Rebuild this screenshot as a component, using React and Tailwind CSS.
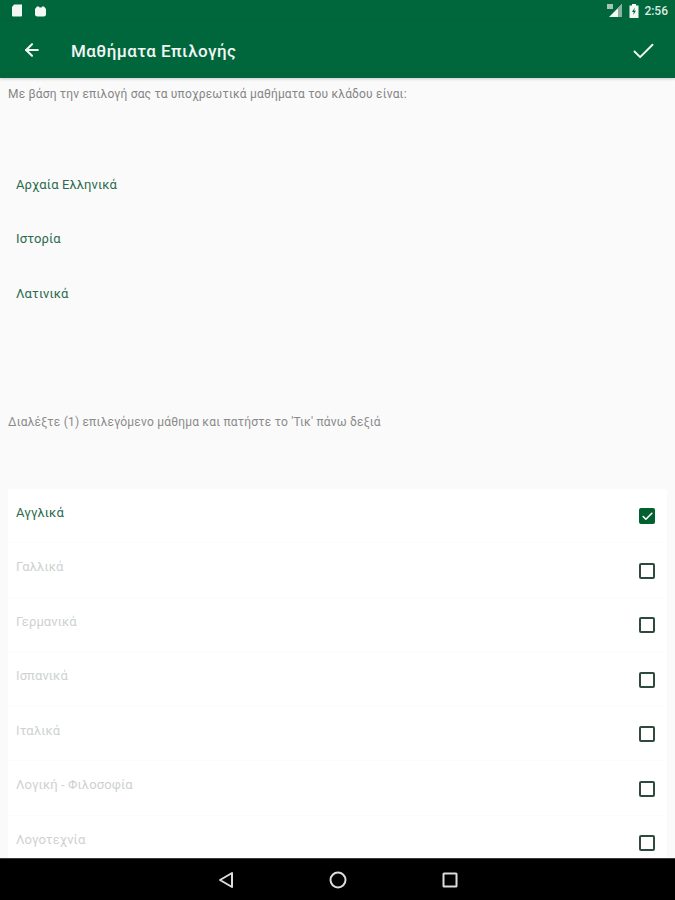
import { ArrowLeft, Check } from "lucide-react";

const required = ["Αρχαία Ελληνικά", "Ιστορία", "Λατινικά"];

const electives = [
  { label: "Αγγλικά", checked: true },
  { label: "Γαλλικά" },
  { label: "Γερμανικά" },
  { label: "Ισπανικά" },
  { label: "Ιταλικά" },
  { label: "Λογική - Φιλοσοφία" },
  { label: "Λογοτεχνία" },
];

function StatusBar() {
  return (
    <div className="h-[21px] flex items-center justify-between pl-[11px] pr-[7px] bg-[#00673d] text-white">
      <div className="flex items-center gap-[11px]">
        <svg width="12" height="13" viewBox="0 0 12 13" fill="#f4f8f5">
          <path d="M3 0.5h8v11a1 1 0 0 1-1 1H2a1 1 0 0 1-1-1V3z" />
        </svg>
        <svg width="13" height="12" viewBox="0 0 13 12" fill="#f4f8f5">
          <path d="M3 1.500h2l.5 1h2l.5-1h2L12 4v5a2.500 2.500 0 0 1-2.500 2.500h-6A2.500 2.500 0 0 1 1 9V4z" />
        </svg>
      </div>
      <div className="flex items-center">
        <svg width="16" height="13" viewBox="0 0 16 13">
          <path d="M15 0v13H2z" fill="#f4f8f5" />
          <path d="M11 4v9H15V0z" fill="#8fb09f" />
          <rect x="0" y="0" width="6" height="5" fill="#a9c4b6" />
        </svg>
        <svg className="ml-[6px]" width="10" height="14" viewBox="0 0 10 14">
          <path d="M3 0h4v1.500h2.500V14H.5V1.500H3z" fill="#f4f8f5" />
          <path d="M5.800 3.500 3 8h1.800l-.6 3L7 6.800H5.200z" fill="#00673d" />
        </svg>
        <span className="ml-[5px] text-[12px] font-medium text-[#dfeae4] font-['Roboto',sans-serif]">2:56</span>
      </div>
    </div>
  );
}

function AppBar() {
  return (
    <div className="h-[57px] flex items-center pl-[22px] pr-[18px] bg-[#00673d] shadow-[0_1px_3px_rgba(0,0,0,0.2)] z-10">
      <ArrowLeft size={20} strokeWidth={2.5} className="text-[#f2f7f4]" />
      <h1 className="ml-[29px] flex-1 mt-[4px] text-[17px] font-medium text-[#f2f7f4] tracking-[0.43px]">Μαθήματα Επιλογής</h1>
      <Check size={27} strokeWidth={1.7} className="text-[#f2f7f4] mt-[4px]" />
    </div>
  );
}

function Checkbox({ checked }) {
  if (checked) {
    return (
      <div className="w-[16px] h-[16px] mt-[2px] rounded-[2px] bg-[#00612f] flex items-center justify-center">
        <Check size={13} strokeWidth={3} className="text-white" />
      </div>
    );
  }
  return <div className="w-[16px] h-[16px] mt-[2px] rounded-[2px] border-2 border-[#2f4a3c]" />;
}

function NavBar() {
  return (
    <div className="h-[42px] shrink-0 flex items-center justify-center gap-[95px] pl-[1px] bg-black border-t border-[#3a3a3a]">
      <svg width="16" height="18" viewBox="0 0 16 18" fill="none" stroke="#dcdcdc" strokeWidth="2" strokeLinejoin="round">
        <path d="M14 2v14L2 9z" />
      </svg>
      <svg width="18" height="18" viewBox="0 0 18 18" fill="none" stroke="#dcdcdc" strokeWidth="2">
        <circle cx="9" cy="9" r="7.500" />
      </svg>
      <svg width="16" height="16" viewBox="0 0 16 16" fill="none" stroke="#dcdcdc" strokeWidth="2">
        <rect x="1.500" y="1.500" width="13" height="13" rx="0.5" />
      </svg>
    </div>
  );
}

export default function App() {
  return (
    <div className="w-[675px] h-[900px] flex flex-col overflow-hidden bg-[#fafafa] font-['Roboto',sans-serif]">
      <StatusBar />
      <AppBar />

      <div className="flex-1 min-h-0 overflow-hidden">
        <p className="mt-[9px] ml-[8px] text-[12px] leading-[14px] tracking-[0.18px] text-[#858585]">
          Με βάση την επιλογή σας τα υποχρεωτικά μαθήματα του κλάδου είναι:
        </p>

        <div className="mt-[56px] pl-[16px]">
          {required.map((subject) => (
            <div key={subject} className="h-[54.500px] flex items-center text-[13px] tracking-[0.1px] text-[#2a6b4d]">
              {subject}
            </div>
          ))}
        </div>

        <p className="mt-[94px] ml-[8px] text-[12px] leading-[14px] tracking-[0.2px] text-[#8a8a8a]">
          Διαλέξτε (1) επιλεγόμενο μάθημα και πατήστε το 'Τικ' πάνω δεξιά
        </p>

        <div className="mt-[60px] mx-[8px] bg-white">
          {electives.map((item) => (
            <div key={item.label} className="h-[54.500px] flex items-center justify-between pl-[8px] pr-[12px] border-b border-[#fcfcfc]">
              <span className={item.checked ? "text-[13px] tracking-[0.1px] mb-[6px] text-[#2a6b4d]" : "text-[13px] tracking-[0.1px] mb-[6px] text-[#ced2d0]"}>
                {item.label}
              </span>
              <Checkbox checked={item.checked} />
            </div>
          ))}
        </div>
      </div>

      <NavBar />
    </div>
  );
}
